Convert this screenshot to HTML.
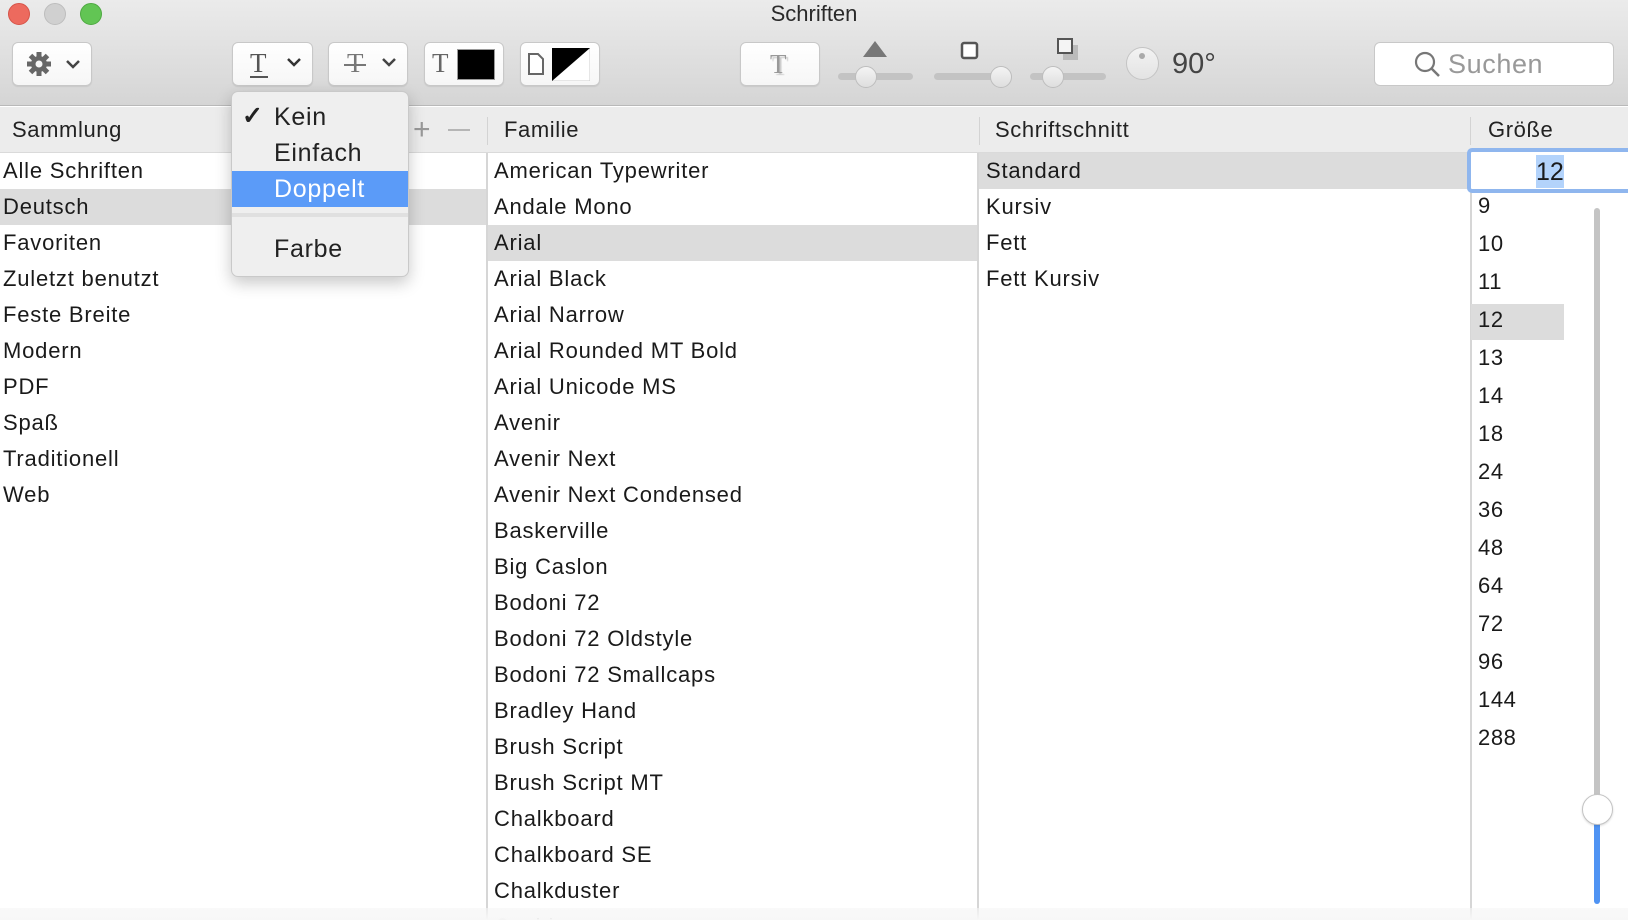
<!DOCTYPE html>
<html><head><meta charset="utf-8"><style>
*{margin:0;padding:0;box-sizing:border-box}
body{width:1628px;height:920px;overflow:hidden;background:#fff;font-family:"Liberation Sans",Helvetica,Arial,sans-serif;color:#1a1a1a;position:relative}
.abs{position:absolute}
#top{left:0;top:0;width:1628px;height:106px;background:linear-gradient(#ebebeb,#d5d5d5);border-bottom:1px solid #b9b9b9}
.tl{width:22px;height:22px;border-radius:50%;top:3px}
.btn{top:42px;height:44px;background:linear-gradient(#fff,#f6f6f6);border:1px solid #c8c8c8;border-radius:6px;box-shadow:0 1px 1px rgba(0,0,0,.08)}
.hdr{top:107px;height:46px;left:0;width:1628px;background:#ececec;border-bottom:1px solid #dadada}
.ht{top:117px;font-size:22px;color:#222;letter-spacing:0.6px}
.sep{top:117px;width:1px;height:28px;background:#d3d3d3}
.row{position:absolute;height:36px;line-height:36px;font-size:22px;white-space:nowrap;letter-spacing:0.8px}
.sel{background:#dcdcdc}
.vline{top:153px;width:2px;height:767px;background:#d6d6d6}
.knob{width:22px;height:22px;border-radius:50%;background:linear-gradient(#f4f4f4,#dedede);border:1px solid #bdbdbd}
#menu{left:231px;top:91px;width:178px;height:186px;background:#efefef;border:1px solid #c9c9c9;border-radius:7px;box-shadow:0 6px 16px rgba(0,0,0,.22)}
.mi{position:absolute;left:0;width:176px;height:36px;line-height:36px;font-size:25px;padding-left:42px;color:#222;letter-spacing:0.7px}
</style></head><body>
<div id="top" class="abs"></div>
<div class="abs tl" style="left:8px;background:#ed6a5e;border:1px solid #d65348"></div>
<div class="abs tl" style="left:44px;background:#d0d0d0;border:1px solid #bdbdbd"></div>
<div class="abs tl" style="left:80px;background:#62c554;border:1px solid #4ea941"></div>
<div class="abs" style="left:0;width:1628px;top:0;text-align:center;font-size:22px;line-height:28px;color:#2a2a2a">Schriften</div>

<div class="abs btn" style="left:12px;width:80px"></div>
<svg class="abs" style="left:24px;top:50px" width="60" height="28" viewBox="0 0 60 28"><g fill="#666"><circle cx="15" cy="14" r="8"/><g stroke="#666" stroke-width="5"><line x1="15" y1="2" x2="15" y2="26"/><line x1="3" y1="14" x2="27" y2="14"/><line x1="6.5" y1="5.5" x2="23.5" y2="22.5"/><line x1="23.5" y1="5.5" x2="6.5" y2="22.5"/></g></g><circle cx="15" cy="14" r="3.5" fill="#f6f6f6"/><path d="M43 11l6 6 6-6" stroke="#444" stroke-width="2.5" fill="none"/></svg>

<div class="abs btn" style="left:232px;width:81px"></div>
<div class="abs" style="left:250px;top:48px;font-family:'Liberation Serif',serif;font-size:27px;color:#555">T</div>
<div class="abs" style="left:250px;top:76px;width:18px;height:2px;background:#555"></div>
<svg class="abs" style="left:286px;top:56px" width="16" height="12"><path d="M2 3l6 6 6-6" stroke="#333" stroke-width="2.5" fill="none"/></svg>

<div class="abs btn" style="left:328px;width:80px"></div>
<div class="abs" style="left:347px;top:48px;font-family:'Liberation Serif',serif;font-size:27px;color:#777">T</div>
<div class="abs" style="left:344px;top:64px;width:22px;height:2px;background:#777"></div>
<svg class="abs" style="left:381px;top:56px" width="16" height="12"><path d="M2 3l6 6 6-6" stroke="#444" stroke-width="2.5" fill="none"/></svg>

<div class="abs btn" style="left:424px;width:80px"></div>
<div class="abs" style="left:432px;top:48px;font-family:'Liberation Serif',serif;font-size:27px;color:#666">T</div>
<div class="abs" style="left:457px;top:49px;width:38px;height:31px;background:#000;border:1px solid #999"></div>

<div class="abs btn" style="left:520px;width:80px"></div>
<svg class="abs" style="left:527px;top:52px" width="18" height="24"><path d="M2 2h9l5 5v15H2z" fill="#fff" stroke="#666" stroke-width="2"/></svg>
<svg class="abs" style="left:552px;top:48px" width="38" height="33"><rect x="0" y="0" width="38" height="33" fill="#fff" stroke="#ccc"/><path d="M0 33L38 0H0z" fill="#000"/></svg>

<div class="abs btn" style="left:740px;width:80px"></div>
<div class="abs" style="left:770px;top:49px;font-family:'Liberation Serif',serif;font-size:27px;color:#999;text-shadow:2px 2px 1px #ccc">T</div>

<svg class="abs" style="left:830px;top:36px" width="290" height="54">
<path d="M45 5l12 16H33z" fill="#777"/>
<rect x="8" y="37" width="75" height="7" rx="3.5" fill="#c3c3c3"/>
<rect x="132" y="7" width="15" height="15" rx="2" fill="#fff" stroke="#555" stroke-width="2.5"/>
<rect x="104" y="37" width="76" height="7" rx="3.5" fill="#c3c3c3"/>
<rect x="233" y="9" width="15" height="15" fill="#bbb"/>
<rect x="228" y="3" width="14" height="14" fill="#f4f4f4" stroke="#555" stroke-width="2"/>
<rect x="200" y="37" width="76" height="7" rx="3.5" fill="#c3c3c3"/>
</svg>
<div class="abs knob" style="left:855px;top:66px"></div>
<div class="abs knob" style="left:990px;top:66px"></div>
<div class="abs knob" style="left:1042px;top:66px"></div>
<div class="abs" style="left:1126px;top:47px;width:33px;height:33px;border-radius:50%;background:linear-gradient(#f3f3f3,#e3e3e3);border:1px solid #c4c4c4"></div>
<div class="abs" style="left:1139px;top:53px;width:6px;height:6px;border-radius:50%;background:#aaa"></div>
<div class="abs" style="left:1172px;top:48px;font-size:29px;color:#444">90°</div>

<div class="abs" style="left:1374px;top:42px;width:240px;height:44px;background:#fff;border:1px solid #c8c8c8;border-radius:6px"></div>
<svg class="abs" style="left:1414px;top:51px" width="28" height="28"><circle cx="11" cy="11" r="9" stroke="#777" stroke-width="2.2" fill="none"/><line x1="17.5" y1="17.5" x2="25" y2="25" stroke="#777" stroke-width="2.5"/></svg>
<div class="abs" style="left:1448px;top:49px;font-size:27px;color:#999;letter-spacing:0.6px">Suchen</div>

<div class="abs hdr"></div>
<div class="abs ht" style="left:12px">Sammlung</div>
<div class="abs" style="left:413px;top:113px;font-size:30px;color:#999;font-weight:300">+</div>
<div class="abs" style="left:448px;top:129px;width:22px;height:2px;background:#b5b5b5"></div>
<div class="abs sep" style="left:487px"></div>
<div class="abs ht" style="left:504px">Familie</div>
<div class="abs sep" style="left:979px"></div>
<div class="abs ht" style="left:995px">Schriftschnitt</div>
<div class="abs sep" style="left:1470px"></div>
<div class="abs ht" style="left:1488px">Größe</div>

<div class="abs vline" style="left:486px"></div>
<div class="abs vline" style="left:977px"></div>
<div class="abs vline" style="left:1470px"></div>

<div class="abs" style="left:0;top:153px;width:486px">
<div class="row" style="top:0;left:3px">Alle Schriften</div>
<div class="row sel" style="top:36px;left:0;width:486px;padding-left:3px">Deutsch</div>
<div class="row" style="top:72px;left:3px">Favoriten</div>
<div class="row" style="top:108px;left:3px">Zuletzt benutzt</div>
<div class="row" style="top:144px;left:3px">Feste Breite</div>
<div class="row" style="top:180px;left:3px">Modern</div>
<div class="row" style="top:216px;left:3px">PDF</div>
<div class="row" style="top:252px;left:3px">Spaß</div>
<div class="row" style="top:288px;left:3px">Traditionell</div>
<div class="row" style="top:324px;left:3px">Web</div>
</div>

<div class="abs" style="left:488px;top:153px;width:489px;height:767px;overflow:hidden">
<div class="row" style="top:0;left:6px">American Typewriter</div>
<div class="row" style="top:36px;left:6px">Andale Mono</div>
<div class="row sel" style="top:72px;left:0;width:489px;padding-left:6px">Arial</div>
<div class="row" style="top:108px;left:6px">Arial Black</div>
<div class="row" style="top:144px;left:6px">Arial Narrow</div>
<div class="row" style="top:180px;left:6px">Arial Rounded MT Bold</div>
<div class="row" style="top:216px;left:6px">Arial Unicode MS</div>
<div class="row" style="top:252px;left:6px">Avenir</div>
<div class="row" style="top:288px;left:6px">Avenir Next</div>
<div class="row" style="top:324px;left:6px">Avenir Next Condensed</div>
<div class="row" style="top:360px;left:6px">Baskerville</div>
<div class="row" style="top:396px;left:6px">Big Caslon</div>
<div class="row" style="top:432px;left:6px">Bodoni 72</div>
<div class="row" style="top:468px;left:6px">Bodoni 72 Oldstyle</div>
<div class="row" style="top:504px;left:6px">Bodoni 72 Smallcaps</div>
<div class="row" style="top:540px;left:6px">Bradley Hand</div>
<div class="row" style="top:576px;left:6px">Brush Script</div>
<div class="row" style="top:612px;left:6px">Brush Script MT</div>
<div class="row" style="top:648px;left:6px">Chalkboard</div>
<div class="row" style="top:684px;left:6px">Chalkboard SE</div>
<div class="row" style="top:720px;left:6px">Chalkduster</div>
<div class="row" style="top:756px;left:6px">Cochin</div>
</div>

<div class="abs" style="left:979px;top:153px;width:491px">
<div class="row sel" style="top:0;left:0;width:491px;padding-left:7px">Standard</div>
<div class="row" style="top:36px;left:7px">Kursiv</div>
<div class="row" style="top:72px;left:7px">Fett</div>
<div class="row" style="top:108px;left:7px">Fett Kursiv</div>
</div>

<div class="abs" style="left:1467px;top:148px;width:170px;height:45px;border:4px solid #8fb6ee;border-radius:5px;background:#fff"></div>
<div class="abs" style="left:1536px;top:155px;width:28px;height:33px;background:#b3d3fb"></div>
<div class="abs" style="left:1536px;top:156px;font-size:25px;line-height:32px">12</div>

<div class="abs sel" style="left:1471px;top:304px;width:93px;height:36px"></div>
<div class="abs" style="left:1478px;top:187px;font-size:22px;line-height:38px;letter-spacing:0.6px">
<div>9</div><div>10</div><div>11</div><div>12</div><div>13</div><div>14</div><div>18</div><div>24</div><div>36</div><div>48</div><div>64</div><div>72</div><div>96</div><div>144</div><div>288</div>
</div>
<div class="abs" style="left:1594px;top:208px;width:6px;height:600px;background:#c4c4c4;border-radius:3px"></div>
<div class="abs" style="left:1594px;top:808px;width:6px;height:96px;background:#4f93f3;border-radius:3px"></div>
<div class="abs" style="left:1582px;top:794px;width:31px;height:31px;border-radius:50%;background:#fff;border:1px solid #c4c4c4;box-shadow:0 1px 2px rgba(0,0,0,.15)"></div>

<div class="abs" style="left:0;top:908px;width:1628px;height:12px;background:linear-gradient(rgba(245,245,245,.6),#f7f7f7)"></div>

<div id="menu" class="abs">
<div class="abs" style="left:10px;top:6px;font-size:25px;line-height:36px;color:#222;font-weight:bold">✓</div>
<div class="mi" style="top:7px">Kein</div>
<div class="mi" style="top:43px">Einfach</div>
<div class="mi" style="top:79px;background:#5b9bf8;color:#fff">Doppelt</div>
<div class="abs" style="left:0;top:121px;width:176px;height:4px;background:#e0e0e0"></div>
<div class="mi" style="top:139px">Farbe</div>
</div>
</body></html>
